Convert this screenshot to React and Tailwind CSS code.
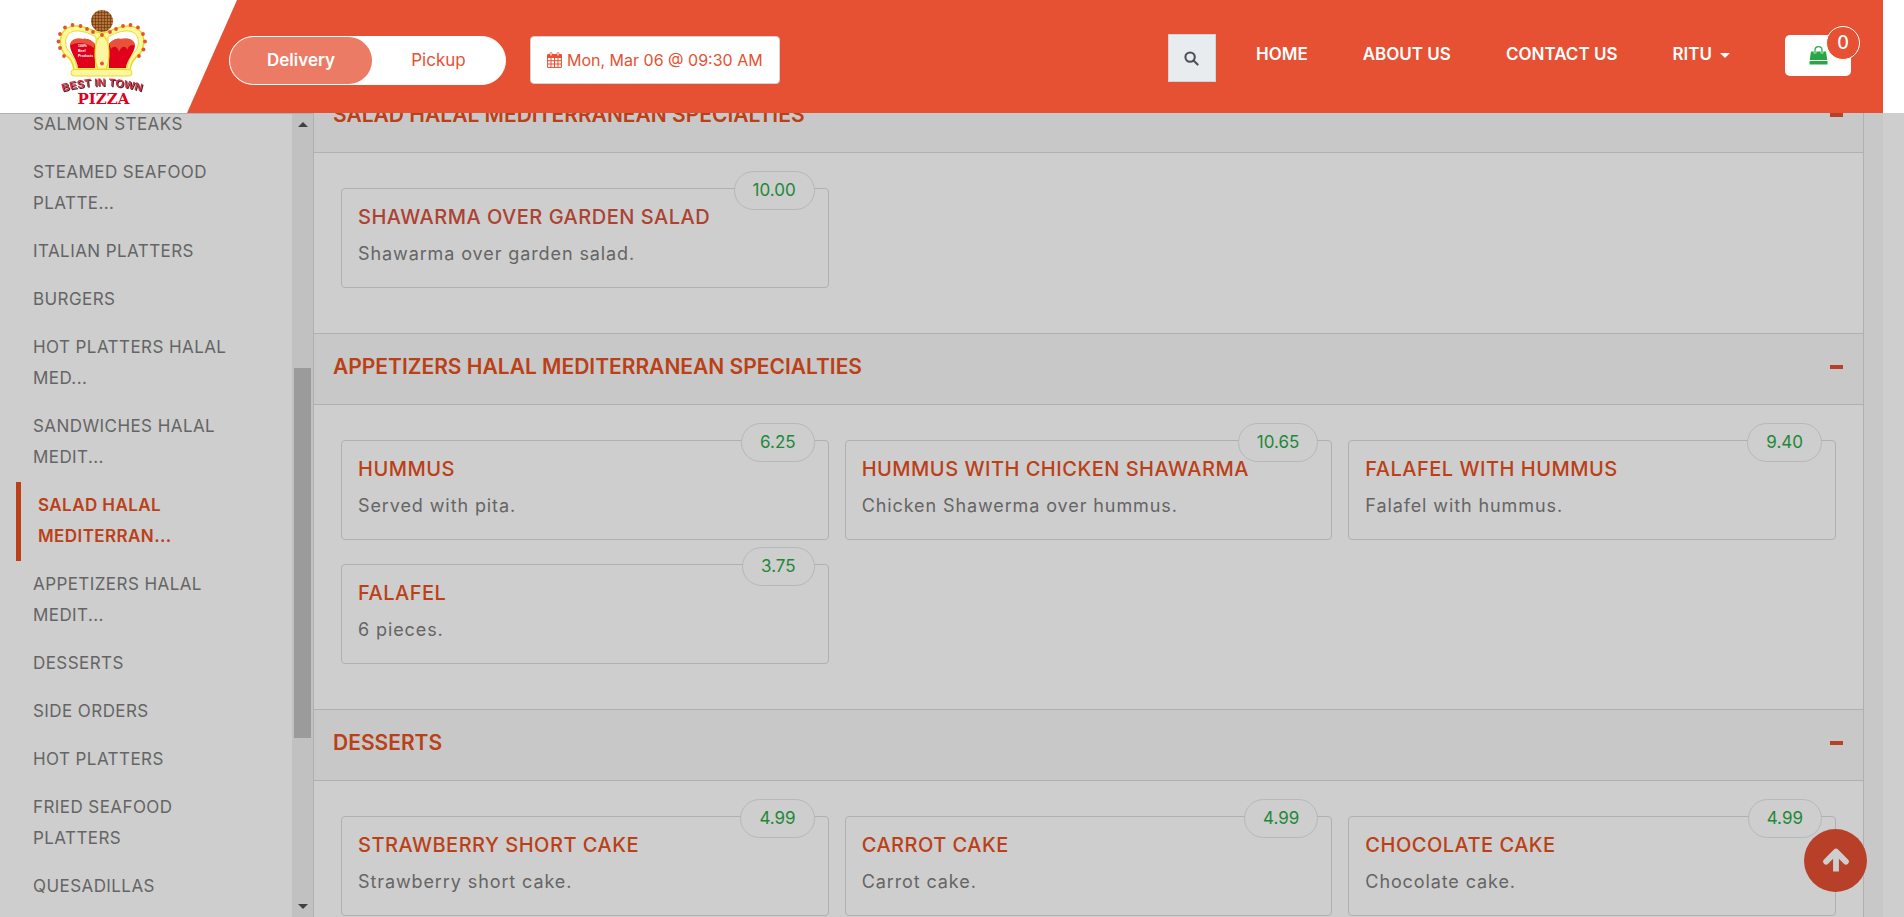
const MENU = [
  "SALMON STEAKS",
  "STEAMED SEAFOOD PLATTE...",
  "ITALIAN PLATTERS",
  "BURGERS",
  "HOT PLATTERS HALAL MED...",
  "SANDWICHES HALAL MEDIT...",
  "SALAD HALAL MEDITERRAN...",
  "APPETIZERS HALAL MEDIT...",
  "DESSERTS",
  "SIDE ORDERS",
  "HOT PLATTERS",
  "FRIED SEAFOOD PLATTERS",
  "QUESADILLAS",
];
const ACTIVE = "SALAD HALAL MEDITERRAN...";

const SECTIONS = [
  {
    title: "SALAD HALAL MEDITERRANEAN SPECIALTIES",
    items: [{ name: "SHAWARMA OVER GARDEN SALAD", text: "Shawarma over garden salad.", price: "10.00", hovered: true }],
  },
  {
    title: "APPETIZERS HALAL MEDITERRANEAN SPECIALTIES",
    items: [
      { name: "HUMMUS", text: "Served with pita.", price: "6.25" },
      { name: "HUMMUS WITH CHICKEN SHAWARMA", text: "Chicken Shawerma over hummus.", price: "10.65" },
      { name: "FALAFEL WITH HUMMUS", text: "Falafel with hummus.", price: "9.40" },
      { name: "FALAFEL", text: "6 pieces.", price: "3.75" },
    ],
  },
  {
    title: "DESSERTS",
    items: [
      { name: "STRAWBERRY SHORT CAKE", text: "Strawberry short cake.", price: "4.99" },
      { name: "CARROT CAKE", text: "Carrot cake.", price: "4.99" },
      { name: "CHOCOLATE CAKE", text: "Chocolate cake.", price: "4.99" },
    ],
  },
];

const BEADS = [
  [60, 47], [58.5, 40.5], [60, 33], [65, 26.5], [72.5, 24], [80.5, 25], [87, 28], [93, 31],
  [102, 34], [110, 31], [116, 28], [123, 25], [130.5, 24], [138, 26.5], [143, 33], [145, 40.5], [143.5, 48.5],
  [64, 55], [139, 55], [102, 62.5],
];

function Logo() {
  return (
    <svg viewBox="50 5 104 102" className="h-[102px] w-[104px]" role="img" aria-label="Best in Town Pizza">
      <defs>
        <path id="arc" d="M58 92 Q102 78 146 92" />
        <pattern id="crust" width="3" height="3" patternUnits="userSpaceOnUse">
          <rect width="3" height="3" fill="#8a4b1d" />
          <circle cx="1" cy="1" r="0.9" fill="#c98a4a" />
          <circle cx="2.5" cy="2.4" r="0.5" fill="#6c380f" />
        </pattern>
      </defs>
      <circle cx="102" cy="20" r="11" fill="url(#crust)" />
      <path d="M74 69 C73 60 69 56 65 54 C56 42 60 25 76 25 C88 25 94 32 102 32 C110 32 116 25 128 25 C144 25 148 42 139 54 C134 57 131 61 130 69 Z" fill="#fdf6a0" stroke="#e8dc1e" strokeWidth="1.5" />
      <path d="M77 67 C76 58 71 53 67 48 C63 37 68 29 79 30 C88 31 92 34 96 36 L96 67 Z" fill="#fff" stroke="#e8dc1e" strokeWidth="1" />
      <path d="M127 67 C128 58 133 53 137 48 C141 37 136 29 125 30 C116 31 112 34 108 36 L108 67 Z" fill="#fff" stroke="#e8dc1e" strokeWidth="1" />
      <path d="M78 67 C77 58 71 53 70 45 C70 38 78 37 83 38 C88 37 92 40 95 43 L95 67 Z" fill="#e0001b" />
      <path d="M126 67 C127 58 134 53 135 45 C135 38 127 37 121 38 C115 37 112 40 109 43 L109 67 Z" fill="#e0001b" />
      <path d="M70 45 C71 37 78 37 83 38 C88 37 92 40 95 43 L94 47 C87 42 76 40 70 45 Z" fill="#e8523a" />
      <path d="M135 45 C134 37 127 37 121 38 C115 37 112 40 109 43 L111 48 C114 44 118 46 119 51 C121 45 126 44 127 49 C129 44 132 43 135 45 Z" fill="#e8523a" />
      <path d="M102 34 C93 38 94 60 98 68 L106 68 C110 60 111 38 102 34 Z" fill="#fdf6a0" stroke="#e8dc1e" strokeWidth="1.2" />
      <rect x="71" y="68.500" width="61" height="6.500" rx="3.200" fill="#fdf6a0" stroke="#e8dc1e" strokeWidth="1" />
      {BEADS.map(([cx, cy]) => (
        <circle key={cx + "-" + cy} cx={cx} cy={cy} r="1.900" fill="#e4532f" />
      ))}
      <g fill="#fff" fontFamily="Liberation Sans, sans-serif" fontWeight="700" fontSize="3.5">
        <text x="78" y="46">100%</text>
        <text x="78" y="51">Beef</text>
        <text x="78" y="56">Products</text>
      </g>
      <text
        fontFamily="Liberation Sans, sans-serif"
        fontWeight="700"
        fontSize="11"
        textAnchor="middle"
        fill="#e0283c"
        className="[filter:drop-shadow(1px_1px_0_#333)]"
      >
        <textPath href="#arc" startOffset="50%">BEST IN TOWN</textPath>
      </text>
      <text x="103.500" y="103" textAnchor="middle" fontFamily="DejaVu Serif, serif" fontWeight="700" fontSize="15" fill="#e0001b">
        PIZZA
      </text>
    </svg>
  );
}

function CalendarIcon() {
  return (
    <svg viewBox="0 0 15 16" className="h-4 w-[15px]" fill="none" stroke="currentColor">
      <path d="M0.600 5.500V15.400H14.400V5.500M0.600 8.700H14.400M0.600 12H14.400M4 5.500V15.400M7.500 5.500V15.400M11 5.500V15.400" strokeWidth="1" />
      <path d="M0 6V3.200Q0 2 1.200 2H13.800Q15 2 15 3.200V6Z" fill="currentColor" stroke="none" />
      <rect x="3" y="0.500" width="2" height="3.500" rx="1" fill="#fff" strokeWidth="0.800" />
      <rect x="10" y="0.500" width="2" height="3.500" rx="1" fill="#fff" strokeWidth="0.800" />
    </svg>
  );
}

function BagIcon() {
  return (
    <svg viewBox="0 0 19 19" className="size-[19px]" fill="currentColor">
      <path d="M2 5.500H17L18.300 14H0.700Z" />
      <path d="M0.500 15H18.500V18.500H0.500Z" />
      <path d="M6 7.500V4C6 -0.500 13 -0.500 13 4V7.500" fill="none" stroke="#fff" strokeWidth="2.600" />
      <path d="M6 7.500V4C6 -0.500 13 -0.500 13 4V7.500" fill="none" stroke="currentColor" strokeWidth="1.200" />
    </svg>
  );
}

function Header() {
  return (
    <header className="relative z-10 h-[113px] shrink-0 bg-white pr-[21px]">
      <div className="flex h-full bg-[#e55132]">
        <a href="#home" className="flex w-[237px] shrink-0 items-center bg-white pl-[50px] [clip-path:polygon(0_0,100%_0,187px_100%,0_100%)]">
          <Logo />
        </a>
        <div className="flex flex-1 items-start justify-between pr-8">
          <div className="flex items-start gap-6 pt-9">
            <div className="-ml-2 flex h-[49px] w-[277px] rounded-full border border-white bg-white text-[17px]">
              <button type="button" className="w-[142px] rounded-full bg-[#ec7b65] font-semibold text-white">Delivery</button>
              <button type="button" className="flex-1 text-[#e55132]">Pickup</button>
            </div>
            <button type="button" className="flex h-12 items-center gap-[5px] rounded border border-[#ced4da] bg-white px-4 text-base text-[#e55132]">
              <CalendarIcon />
              Mon, Mar 06 @ 09:30 AM
            </button>
          </div>
          <div className="flex items-start">
            <button type="button" aria-label="Search" className="mt-[34px] flex size-12 items-center justify-center border border-[#ced4da] bg-[#e9ecef] text-[#495057]">
              <svg viewBox="0 0 16 16" className="size-[15px]" fill="none" stroke="currentColor" strokeWidth="2.200">
                <circle cx="6.500" cy="6.500" r="5" />
                <path d="M10.200 10.200 14.500 14.500" strokeLinecap="round" />
              </svg>
            </button>
            <nav className="ml-10 mt-10 flex h-[30px] items-center gap-[55px] text-[17px] font-semibold text-white">
              <a href="#home">HOME</a>
              <a href="#about">ABOUT US</a>
              <a href="#contact">CONTACT US</a>
              <a href="#account" className="flex items-center gap-2">
                RITU
                <span className="border-x-[5px] border-t-[5px] border-x-transparent border-t-white" />
              </a>
            </nav>
            <button type="button" aria-label="Cart" className="relative ml-[55px] mt-[35px] flex h-[41px] w-[66px] items-center justify-center rounded-[5px] bg-white text-[#28a745]">
              <BagIcon />
              <span className="absolute -right-[9px] -top-[9px] flex size-[34px] items-center justify-center rounded-full border border-white bg-[#e55132] text-lg font-medium text-white">0</span>
            </button>
          </div>
        </div>
      </div>
    </header>
  );
}

function Sidebar() {
  return (
    <aside className="flex w-[314px] shrink-0 border-r border-t border-[#b0b0b0]">
      <nav className="-mt-[13px] flex-1 px-4">
        {MENU.map((name) => (
          <a
            key={name}
            href="#menu"
            className={
              "block pb-[9px] pl-[17px] pr-10 pt-2 text-[17px] leading-[31px] tracking-wide " +
              (name === ACTIVE ? "border-l-[5px] border-[#bb3f17] font-semibold text-[#bb3f17]" : "text-[#656565]")
            }
          >
            {name}
          </a>
        ))}
      </nav>
      <div className="flex w-[21px] flex-col items-center justify-between bg-[#c1c1c1] py-2">
        <span className="border-x-[5px] border-b-[5px] border-x-transparent border-b-[#404040]" />
        <span className="mt-[75px] h-[370px] w-[17px] bg-[#9b9b9b]" />
        <span className="border-x-[5px] border-t-[5px] border-x-transparent border-t-[#404040]" />
      </div>
    </aside>
  );
}

function Card({ item }) {
  return (
    <article className="relative h-[100px] rounded border border-[#b0b0b0] px-4">
      <h3 className={"mt-[14px] whitespace-nowrap text-xl font-medium leading-7 tracking-wide " + (item.hovered ? "text-[#ab4232]" : "text-[#bb3f17]")}>{item.name}</h3>
      <p className="mt-[9px] text-lg leading-7 tracking-wider text-[#656565]">{item.text}</p>
      <span className="absolute -top-[18px] right-[13px] flex h-[39px] items-center rounded-full border border-[#b5b8bb] bg-[#cecece] px-[18px] text-[17px] text-[#218838]">{item.price}</span>
    </article>
  );
}

export default function App() {
  return (
    <div className="flex h-screen flex-col overflow-hidden bg-[#cecece] font-['Inter',sans-serif]">
      <Header />
      <div className="flex min-h-0 flex-1 pr-[21px]">
        <Sidebar />
        <main className="-mt-8 flex-1 border-r border-[#b0b0b0]">
          {SECTIONS.map((section) => (
            <section key={section.title}>
              <button type="button" className="flex h-[72px] w-full items-center justify-between border-y border-[#b0b0b0] bg-[#c8c8c8] pb-1 pl-[19px] pr-5 text-[21px] font-semibold text-[#bb3f17]">
                {section.title}
                <span className="h-1 w-[13px] bg-[#b84029]" />
              </button>
              <div className="grid grid-cols-3 gap-x-4 gap-y-6 px-[27px] pb-[45px] pt-[35px]">
                {section.items.map((item) => (
                  <Card key={item.name} item={item} />
                ))}
              </div>
            </section>
          ))}
        </main>
        <div className="w-[19px] bg-[#c8c8c8]" />
      </div>
      <button type="button" aria-label="Back to top" className="fixed bottom-[25px] right-[37px] z-20 flex size-[63px] items-center justify-center rounded-full bg-[#b84029] text-[#cecece]">
        <svg viewBox="0 0 24 24" className="size-7" fill="none" stroke="currentColor" strokeWidth="5">
          <path d="M3.500 12.500 12 4l8.500 8.500" strokeLinecap="round" strokeLinejoin="round" />
          <path d="M12 5v16" />
        </svg>
      </button>
    </div>
  );
}
